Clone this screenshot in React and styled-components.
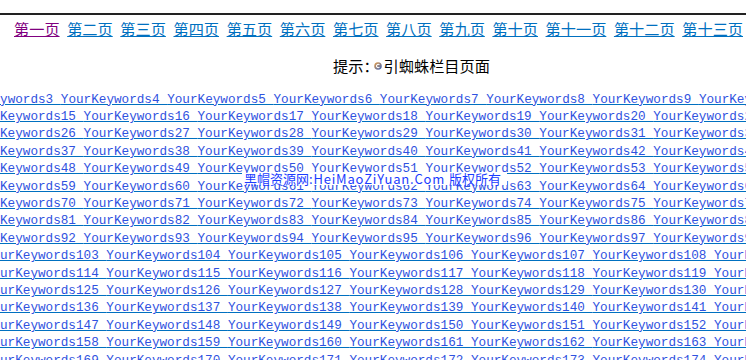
import React from "react"
import styled, { createGlobalStyle } from "styled-components"

const GlobalStyle = createGlobalStyle`
  body {
    margin: 0;
    background: #fff;
  }
`

const numerals = ["一", "二", "三", "四", "五", "六", "七", "八", "九", "十"]

const cnNumber = (n) => {
  if (n <= 10) return numerals[n - 1]
  if (n < 20) return "十" + numerals[n - 11]
  return numerals[Math.floor(n / 10) - 1] + "十" + (n % 10 ? numerals[(n % 10) - 1] : "")
}

const pages = Array.from({ length: 16 }, (_, i) => `第${cnNumber(i + 1)}页`)

// first row holds 1..14, every following row holds 11 keywords
const buildRows = () => {
  const rows = [{ cut: 34, items: Array.from({ length: 14 }, (_, i) => i + 1) }]
  let start = 15
  for (let r = 0; r < 15; r++) {
    rows.push({
      cut: start >= 100 ? 2 : 4,
      items: Array.from({ length: 11 }, (_, i) => start + i),
    })
    start += 11
  }
  return rows
}

const rows = buildRows()

const Page = styled.div`
  position: relative;
  height: 360px;
  overflow: hidden;
`

const TopRule = styled.div`
  margin-top: 13px;
  height: 2px;
  background: #222;
`

const Nav = styled.nav`
  display: flex;
  gap: 7.6px;
  margin-top: 5px;
  padding-left: 14px;
  white-space: nowrap;
  font-family: "Noto Sans CJK SC", sans-serif;
  font-size: 15.2px;
  line-height: 16px;
`

const PageLink = styled.a`
  flex: none;
  color: ${(p) => (p.$visited ? "#800080" : "#0070c0")};
  text-decoration: underline;
  text-underline-offset: 1px;
  cursor: pointer;
`

const Hint = styled.div`
  display: flex;
  align-items: center;
  margin-top: 21px;
  padding-left: 333px;
  font-family: "Noto Sans CJK SC", sans-serif;
  font-size: 15.2px;
  line-height: 16px;
  color: #000;
`

const Badge = styled.svg`
  width: 8px;
  height: 8px;
  margin: 1px 2px 0 -5px;
`

const Keywords = styled.div`
  margin-top: 17.6px;
  font-family: "Liberation Mono", "Courier New", monospace;
  font-size: 12.67px;
  line-height: 17.4px;
`

const KeyRow = styled.div`
  white-space: pre;
  overflow: hidden;
  text-indent: -${(p) => p.$cut}ch;
`

const KeyLink = styled.a`
  color: #2f52e0;
  text-decoration: underline;
  text-decoration-color: #0070c0;
  cursor: pointer;
`

const Watermark = styled.div`
  position: absolute;
  left: 242px;
  top: 173px;
  padding: 0 6px 0 2px;
  background: #fff;
  color: #1a3cff;
  font-family: "Noto Sans CJK SC", sans-serif;
  font-size: 13px;
  line-height: 12px;
  white-space: nowrap;
`

const WatermarkDomain = styled.span`
  letter-spacing: 0.8px;
  margin-right: 4px;
`

const CopyBadge = () => (
  <Badge viewBox="0 0 8 8">
    <defs>
      <linearGradient id="cb" x1="0" y1="0" x2="1" y2="1">
        <stop offset="0" stopColor="#f0a040" />
        <stop offset="1" stopColor="#3060c0" />
      </linearGradient>
    </defs>
    <circle cx="4" cy="4" r="3.8" fill="url(#cb)" />
    <path d="M5.4 2.8 A1.7 1.7 0 1 0 5.4 5.2" fill="none" stroke="#fff" strokeWidth="1.1" />
  </Badge>
)

export default function App() {
  return (
    <Page>
      <GlobalStyle />
      <TopRule />
      <Nav>
        {pages.map((label, i) => (
          <PageLink key={label} $visited={i === 0}>
            {label}
          </PageLink>
        ))}
      </Nav>
      <Hint>
        提示：
        <CopyBadge />
        引蜘蛛栏目页面
      </Hint>
      <Keywords>
        {rows.map((row, r) => (
          <KeyRow key={r} $cut={row.cut}>
            {row.items.map((n) => (
              <KeyLink key={n}>{`YourKeywords${n} `}</KeyLink>
            ))}
          </KeyRow>
        ))}
      </Keywords>
      <Watermark>
        黑帽资源网<WatermarkDomain>:HeiMaoZiYuan.Com</WatermarkDomain>版权所有
      </Watermark>
    </Page>
  )
}
